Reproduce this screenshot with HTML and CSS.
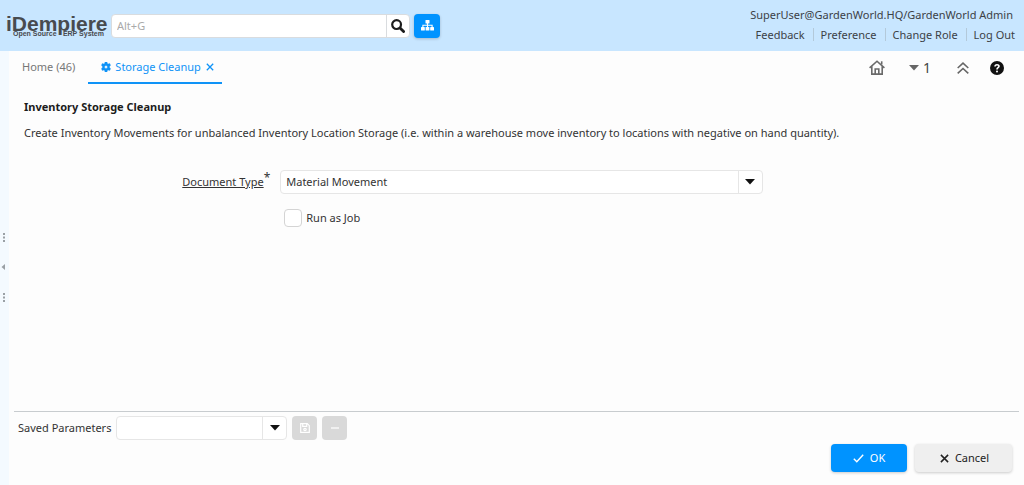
FILE: index.html
```
<!DOCTYPE html>
<html lang="en">
<head>
<meta charset="utf-8">
<meta name="viewport" content="width=device-width, initial-scale=1">
<title>iDempiere - Storage Cleanup</title>
<link rel="stylesheet" href="styles.css">
</head>
<body>
<header class="header">
  <a class="logo" href="#" aria-label="iDempiere Open Source ERP System">
    <span class="logo-name">iDempiere</span>
    <span class="logo-tagline"><span>Open Source</span><span>ERP System</span></span>
  </a>
  <form class="search">
    <input class="search-input" type="text" placeholder="Alt+G" aria-label="Global search">
    <button class="search-button" type="button" aria-label="Search">
      <svg width="14" height="14" viewBox="0 0 14 14" fill="none" stroke="#1c1c1c"><circle cx="5.6" cy="5.6" r="4.4" stroke-width="2.2"/><path d="M9 9l3.6 3.6" stroke-width="2.8" stroke-linecap="round"/></svg>
    </button>
  </form>
  <button class="menu-button" type="button" aria-label="Menu">
    <svg width="13" height="11" viewBox="0 0 13 11" fill="#fff"><rect x="4.5" y="0" width="4" height="3.6" rx=".6"/><rect x="0" y="7" width="3.8" height="3.6" rx=".6"/><rect x="4.6" y="7" width="3.8" height="3.6" rx=".6"/><rect x="9.2" y="7" width="3.8" height="3.6" rx=".6"/><path d="M6.5 3v4.500M1.900 7.500V5.300h9.200v2.200" fill="none" stroke="#fff" stroke-width="1.100"/></svg>
  </button>
  <div class="account">
    <div class="account-user">SuperUser@GardenWorld.HQ/GardenWorld Admin</div>
    <nav class="account-links">
      <a href="#">Feedback</a>
      <a href="#">Preference</a>
      <a href="#">Change Role</a>
      <a href="#">Log Out</a>
    </nav>
  </div>
</header>
<div class="workspace">
  <div class="splitter">
    <svg width="8" height="70" viewBox="0 0 8 70" fill="#9aa0a5"><path d="M3 0h2v2H3zM3 3.500h2v2H3zM3 7h2v2H3zM5 31v6L1.500 34zM3 60h2v2H3zM3 63.500h2v2H3zM3 67h2v2H3z"/></svg>
  </div>
  <div class="page">
    <div class="tabbar">
      <nav class="tabs">
        <a class="tab" href="#">Home (46)</a>
        <a class="tab tab-active" href="#">
          <svg width="10" height="10" viewBox="0 0 10 10" fill="#0f93f7" fill-rule="evenodd"><path d="M4 0h2l.3 1.400.9.5L8.600 1.400l1 1.800L8.600 4.200v1.600l1 1-1 1.800-1.400-.5-.9.5L6 10H4l-.3-1.400-.9-.5-1.400.5-1-1.800 1-1V4.200l-1-1 1-1.800 1.400.5.9-.5zM5 3.500a1.500 1.500 0 100 3 1.500 1.500 0 000-3z" stroke="#0f93f7" stroke-width=".4"/></svg>
          <span class="tab-title">Storage Cleanup</span>
          <svg width="8" height="8" viewBox="0 0 8 8" stroke="#0f93f7" stroke-width="1.300"><path d="M.8.8l6.400 6.400M7.200.8L.8 7.200"/></svg>
        </a>
      </nav>
      <div class="tools">
        <button class="tool" type="button" aria-label="Home">
          <svg width="16" height="15" viewBox="0 0 16 15" fill="none" stroke="#6a6a6a" stroke-width="1.600"><path d="M.6 7.800L8 1.200l7.400 6.600M2.800 6.200v7.900h10.400V6.200"/><path d="M6.200 14V9h3.600v5"/><path d="M12.700 1.300v3.200"/></svg>
        </button>
        <button class="tool tool-count" type="button">
          <svg width="10" height="6" viewBox="0 0 10 6" fill="#666"><path d="M0 0h10L5 5.500z"/></svg>
          <span>1</span>
        </button>
        <button class="tool" type="button" aria-label="Collapse header">
          <svg width="12" height="12" viewBox="0 0 12 12" fill="none" stroke="#666" stroke-width="1.600"><path d="M.7 6L6 1.200 11.300 6M.7 11.300L6 6.500l5.300 4.800"/></svg>
        </button>
        <button class="tool" type="button" aria-label="Help">
          <svg width="14" height="14" viewBox="0 0 14 14"><circle cx="7" cy="7" r="7" fill="#111"/><path d="M5 5.500C5.100 3 9 3.200 9 5.300 9 6.800 7 6.600 7 8.400" fill="none" stroke="#fff" stroke-width="1.600"/><circle cx="7" cy="10.400" r="1" fill="#fff"/></svg>
        </button>
      </div>
    </div>
    <main class="content">
      <h1 class="title">Inventory Storage Cleanup</h1>
      <p class="description">Create Inventory Movements for unbalanced Inventory Location Storage (i.e. within a warehouse move inventory to locations with negative on hand quantity).</p>
      <div class="form">
        <label class="form-label" for="doctype"><span class="label-text">Document Type</span><span class="required">*</span></label>
        <div class="combo">
          <select class="combo-select" id="doctype"><option>Material Movement</option></select>
          <span class="combo-arrow"><svg width="10" height="6" viewBox="0 0 10 6" fill="#111"><path d="M0 0h10L5 5.500z"/></svg></span>
        </div>
        <label class="check"><input class="check-box" type="checkbox"><span>Run as Job</span></label>
      </div>
    </main>
    <footer class="footer">
      <div class="saved">
        <label for="saved">Saved Parameters</label>
        <div class="combo combo-saved">
          <select class="combo-select" id="saved"><option></option></select>
          <span class="combo-arrow"><svg width="10" height="6" viewBox="0 0 10 6" fill="#111"><path d="M0 0h10L5 5.500z"/></svg></span>
        </div>
        <button class="small-button" type="button" disabled aria-label="Save">
          <svg width="10" height="10" viewBox="0 0 10 10" fill="none" stroke="#fff" stroke-width="1.200"><path d="M.7.7h6.600l2 2v6.600H.7zM2.700.7v2.600h4V.7"/><circle cx="5" cy="6.500" r="1.200"/></svg>
        </button>
        <button class="small-button" type="button" disabled aria-label="Delete">
          <svg width="10" height="10" viewBox="0 0 10 10" stroke="#fff" stroke-width="1.200"><path d="M1 5h8"/></svg>
        </button>
      </div>
      <div class="actions">
        <button class="button button-ok" type="button">
          <svg width="11" height="9" viewBox="0 0 11 9" fill="none" stroke="#fff" stroke-width="1.400"><path d="M.8 4.800l3 3L10.200.8"/></svg>
          <span>OK</span>
        </button>
        <button class="button button-cancel" type="button">
          <svg width="9" height="9" viewBox="0 0 9 9" stroke="#222" stroke-width="1.500"><path d="M.9.9l7.200 7.200M8.100.9L.9 8.100"/></svg>
          <span>Cancel</span>
        </button>
      </div>
    </footer>
  </div>
</div>
</body>
</html>
```
FILE: styles.css
```
* {
  box-sizing: border-box;
}

body {
  margin: 0;
  min-height: 100vh;
  display: flex;
  flex-direction: column;
  background: #fdfdfd;
  color: #333;
  font-family: "Noto Sans", "Liberation Sans", sans-serif;
  font-size: 11px;
  line-height: 16px;
}

button,
input,
select {
  font: inherit;
  color: inherit;
}

button {
  display: flex;
  align-items: center;
  justify-content: center;
  padding: 0;
  border: 0;
  background: none;
}

a {
  color: inherit;
  text-decoration: none;
}

svg {
  display: block;
  flex: none;
}

.header {
  display: flex;
  align-items: center;
  min-height: 51px;
  padding: 0 9px 0 6px;
  background: #c8e6ff;
}

.logo {
  width: 100px;
  margin-right: 5px;
  color: #484b4f;
  font-family: "Liberation Sans", Arial, sans-serif;
  font-weight: bold;
}

.logo-name {
  display: block;
  font-size: 21px;
  line-height: 16px;
}

.logo-tagline {
  display: flex;
  justify-content: space-between;
  padding: 0 2px 0 7px;
  font-size: 7px;
  line-height: 4px;
}

.search {
  display: flex;
  width: 299px;
  height: 24px;
  border: 1px solid #d9dcdf;
  border-radius: 4px;
  background: #fff;
}

.search-input {
  flex: 1;
  min-width: 0;
  padding: 0 5px;
  border: 0;
  background: none;
}

.search-input::placeholder {
  color: #aaa;
}

.search-button {
  width: 23px;
  border-left: 1px solid #d9dcdf;
}

.menu-button {
  width: 26px;
  height: 24px;
  margin-left: 4px;
  border-radius: 4px;
  background: #0093ff;
  box-shadow: 0 1px 3px #0003;
}

.account {
  margin-left: auto;
  padding-bottom: 5px;
  color: #3c4146;
  text-align: right;
}

.account-user {
  padding-right: 2px;
  line-height: 18px;
}

.account-links {
  display: flex;
  justify-content: flex-end;
  padding: 4px 0 0;
}

.account-links a {
  line-height: 13px;
}

.account-links a + a {
  margin-left: 8px;
  padding-left: 7px;
  border-left: 1px solid #b3c9da;
}

.workspace {
  flex: 1;
  display: flex;
}

.splitter {
  display: flex;
  align-items: center;
  width: 9px;
  background: #f4faff;
}

.page {
  flex: 1;
  min-width: 0;
  display: flex;
  flex-direction: column;
}

.tabbar {
  display: flex;
  justify-content: space-between;
  min-height: 33px;
}

.tabs {
  display: flex;
}

.tab {
  display: flex;
  align-items: center;
  gap: 4px;
  padding: 0 13px;
  border-bottom: 2px solid transparent;
  color: #777;
}

.tab-active {
  padding: 0 8px 0 13px;
  border-color: #0f93f7;
  color: #0f93f7;
}

.tab-title {
  padding-right: 1px;
}

.tools {
  display: flex;
  align-items: center;
  gap: 21px;
  padding-right: 20px;
}

.tool-count {
  gap: 4px;
  padding: 0 5px 0 3px;
  color: #444;
  font-size: 14px;
}

.content {
  flex: 1;
  padding: 15px;
}

.title {
  margin: 0 0 10px;
  color: #1c1c1c;
  font-size: 11px;
}

.description {
  margin: 0 0 29px;
}

.form {
  display: grid;
  grid-template-columns: 25% 49%;
  column-gap: 10px;
  row-gap: 15px;
}

.form-label {
  display: flex;
  align-items: center;
  justify-content: flex-end;
}

.label-text {
  text-decoration: underline;
}

.required {
  align-self: flex-start;
  font-size: 12px;
}

.combo {
  display: grid;
  grid-template-columns: 1fr 24px;
  height: 24px;
  border: 1px solid #e6e6e6;
  border-radius: 4px;
  background: #fff;
}

.combo-select {
  grid-area: 1 / 1 / 2 / 3;
  min-width: 0;
  padding: 0 28px 0 5px;
  border: 0;
  background: none;
  appearance: none;
}

.combo-arrow {
  grid-area: 1 / 2;
  display: flex;
  align-items: center;
  justify-content: center;
  border-left: 1px solid #e6e6e6;
  pointer-events: none;
}

.check {
  grid-column: 2;
  display: flex;
  align-items: center;
  gap: 4px;
  padding-left: 4px;
}

.check-box {
  width: 18px;
  height: 18px;
  margin: 0;
  border: 1px solid #d4d4d4;
  border-radius: 4px;
  background: #fff;
  appearance: none;
}

.check-box:checked {
  background: #0093ff;
}

.footer {
  margin: 0 5px;
  padding: 4px 7px 13px 4px;
  border-top: 1px solid #c8cccf;
}

.saved {
  display: flex;
  align-items: center;
  gap: 5px;
}

.combo-saved {
  width: 171px;
}

.small-button {
  width: 25px;
  height: 24px;
  border-radius: 4px;
  background: #d9d9d9;
}

.actions {
  display: flex;
  justify-content: flex-end;
  gap: 8px;
  padding-top: 4px;
}

.button {
  gap: 6px;
  height: 28px;
  border-radius: 4px;
  box-shadow: 0 1px 3px #0003;
}

.button-ok {
  width: 76px;
  background: #0093ff;
  color: #fff;
}

.button-cancel {
  width: 97px;
  padding-left: 2px;
  background: #efefef;
  color: #222;
}
```
